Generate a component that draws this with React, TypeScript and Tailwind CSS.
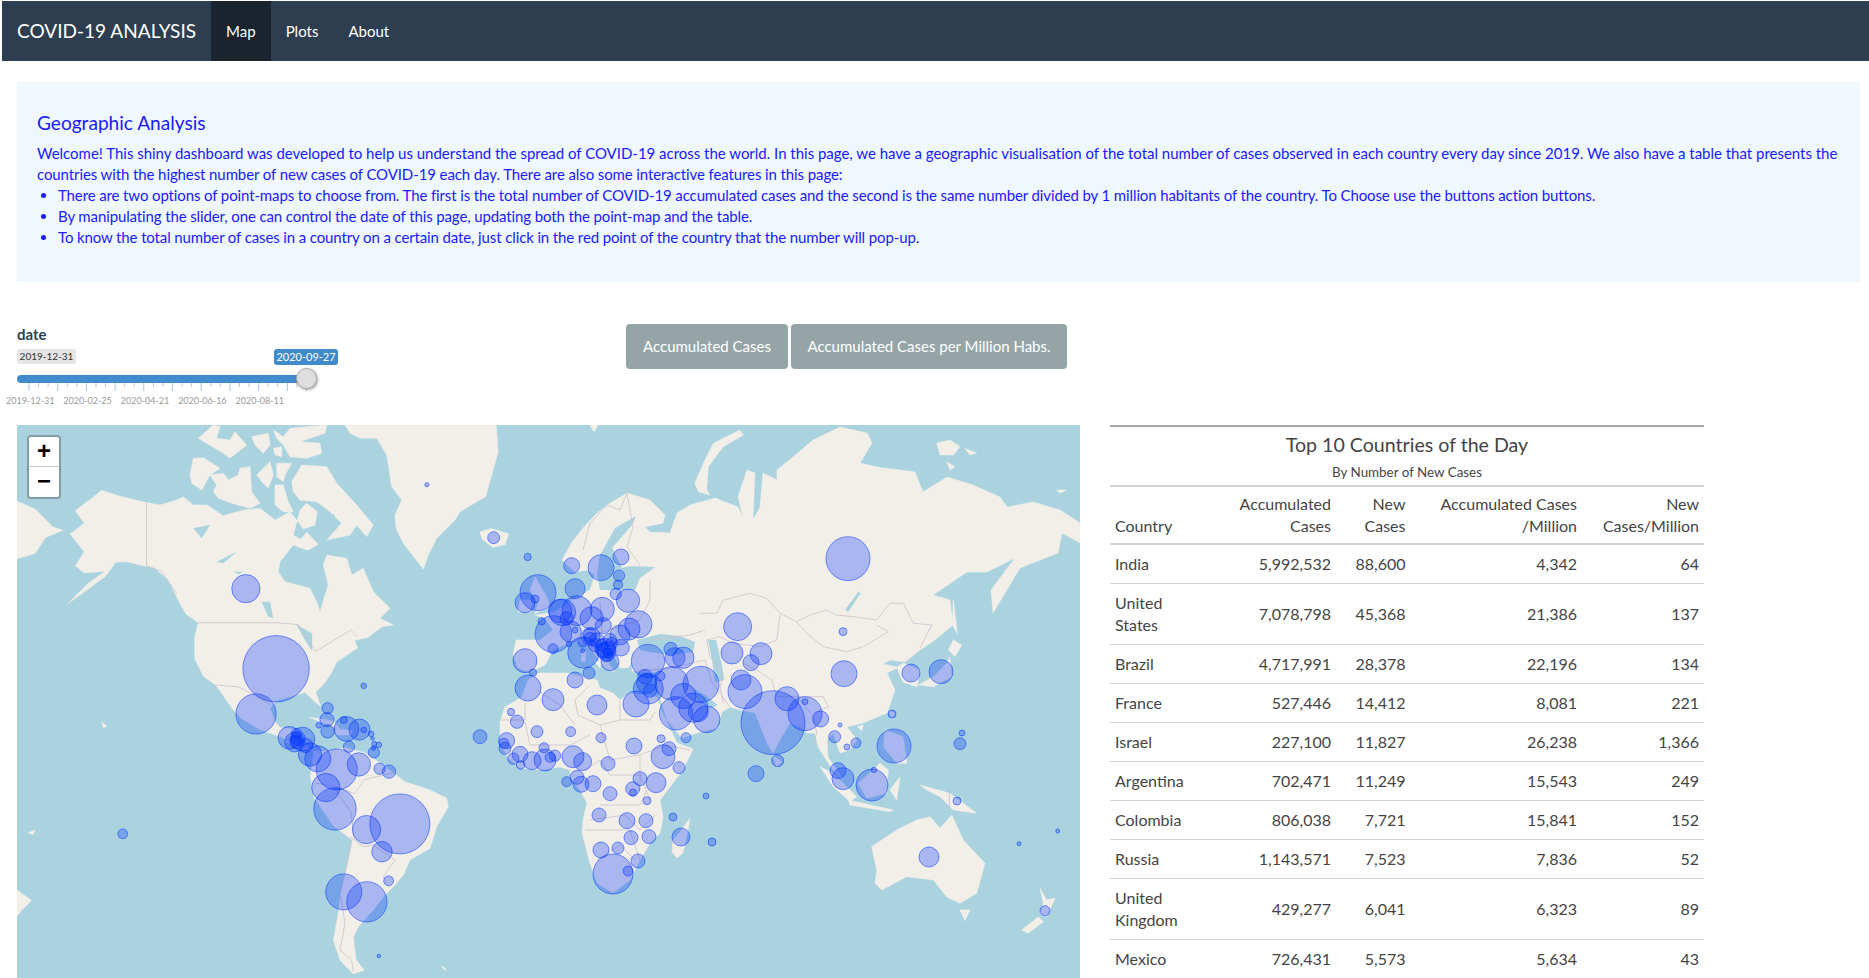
import React from "react";

const pts = (a: number[], ox: number, oy: number, sx: number, sy: number) => {
  const out: string[] = [];
  for (let i = 0; i < a.length; i += 2) out.push(`${(ox + a[i] / sx).toFixed(1)},${(oy + a[i + 1] / sy).toFixed(1)}`);
  return out.join(" ");
};
const pg = (a: number[]) => pts(a, 0, 0, 1, 1);
const z5 = (a: number[]) => pts(a, 0, 420, 2.851, 2.81);
const z3 = (a: number[]) => pts(a, 600, 300, 3, 3);
const z7 = (a: number[]) => pts(a, 700, 500, 3, 3);
const zA = (a: number[]) => pts(a, 160, 425, 3, 3);
const zB = (a: number[]) => pts(a, 330, 780, 3, 3);

const land: string[] = [
  // North & Central America
  z5([215,255,290,198,345,215,418,232]) + " " +
    zA([0,240,50,225,70,215,100,240,140,240,190,272,250,255,300,250,345,285,390,260,410,285,430,312,465,300,472,260,440,235,420,255,400,330,425,345,470,355,440,375,400,360,360,410,355,440,375,470,450,490,470,530,480,560,495,510,505,480,490,420,500,390,560,400,575,450,610,430,640,500,690,550,660,580,700,600]) + " " +
    z5([1090,580,1050,610,1010,620,1020,640,960,680,945,710,925,740,900,765,915,805,895,790,870,765,820,780,785,790,770,810,785,850,800,865,850,870,860,880,830,885,810,905,870,915,895,930,860,925,800,890,740,870,690,840,665,815,640,780,615,745,580,720,555,670,555,610,565,570,530,545,505,500,480,450,440,415,410,410,360,398,330,400,300,440,245,480,195,515,250,460,300,425,240,430,215,410,240,370,200,320,240,290]),
  // Arctic Canada
  zA([100,100,130,98,180,130,150,150,125,195,95,175,90,150]),
  zA([150,150,190,145,205,165,235,150,240,130,270,125,275,200,300,235,270,250,215,235,175,220,160,200,170,180]),
  zA([290,150,330,110,340,150,325,190,305,170]),
  zA([350,115,395,115,375,150,370,170,350,155]),
  zA([345,180,370,180,385,230,400,260,370,260,345,240]),
  zA([115,40,160,0,180,5,170,40,210,45,225,20,260,60,210,100,190,85,165,70]),
  zA([275,35,325,25,330,60,310,85,285,60]),
  zA([340,15,370,35,390,10,500,0,495,25,420,50,480,55,485,85,440,100,390,95,370,60,350,40]),
  zA([340,70,365,65,365,95,345,90]),
  zA([395,170,425,120,500,125,530,175,590,240,640,300,620,335,590,300,570,330,500,345,545,295,510,260,470,230,420,225,400,200]),
  zA([420,345,440,322,475,358,445,375]),
  // Greenland, Iceland, Chukotka
  zA([555,0,570,25,600,40,650,40,680,90,695,185,725,225,705,270,708,310,730,355,790,432,805,390,830,340,885,285,900,260]) + " " + z5([1385,215,1420,90,1415,14]),
  z5([1368,315,1400,305,1450,320,1440,350,1405,358,1375,335]),
  z5([48,228,100,250,150,300,180,310,130,330,100,375,48,390]),
  // South America
  z5([895,930,935,930,985,920,1040,935,1085,965]) + " " +
    zB([225,5,300,30,350,55,355,80,320,140,300,205,240,240,220,285,195,315,165,345,130,390,85,440,70,470,78,540,103,570,70,582,30,540,10,480,25,400,32,340,50,260,67,180]) + " " +
    z5([950,1140,895,1060,885,1000]),
  z5([880,835,950,845,970,870,920,850]),
  z5([955,868,1005,872,1000,885,960,885]),
  z5([48,1320,90,1350,60,1380,48,1395]),
  z5([80,1160,100,1152,95,1165]),
  z5([290,850,305,860,295,865]),
  zB([333,558,345,565,348,572,338,565]),
  // Eurasia
  pg([562,560,572,542,583,528,595,515,607,505,627,493,650,500,665,515,663,523,645,527,650,532,670,533,677,513,690,505,715,498,728,503,738,507,743,517,738,497,747,470,755,473,753,520,760,507,763,473,777,480,777,470,793,457,813,440,840,427,867,433,872,443,860,463,877,467,900,470,915,472,923,492,947,477,973,485,1000,497,1007,507,1033,502,1060,510,1080,523,1080,543,1062,533,1058,553,1020,568,993,613,991,590,1015,558,987,572,967,572,933,595,950,600,953,625,935,640,920,650,905,662,890,660,883,664,897,667,903,663,920,670,917,687,903,682,897,668,887,673,895,690,887,713,863,723,847,727,857,740,850,750,840,753,833,733,827,740,828,757,843,780,833,770,818,747,815,733,807,733,800,727,790,723,780,740,773,753,767,743,755,713,740,710,730,707,722,712,717,728,697,733,682,738,667,720,660,698,657,682,657,672,632,672,632,662,628,668,620,668,612,652,600,642,610,665,615,672,605,668,590,648,578,640,565,645,553,650,545,665,530,672,518,668,513,655,516,640,540,640,553,630,545,618,535,615,555,612,572,600,590,590,595,575,588,570,575,572]),
  // Africa
  pg([500,722,505,707,522,697,528,680,537,673,567,673,597,680,600,688,613,693,620,700,630,693,657,697,662,712,677,743,693,749,683,770,660,800,663,817,660,833,650,843,640,860,630,880,613,893,597,883,590,863,582,833,583,820,587,803,580,790,570,778,570,770,560,767,540,770,520,768,508,758,500,743]),
  pg([690,818,688,830,683,853,677,858,672,852,673,840,680,832]),
  // UK, Ireland, Europe isles
  pg([535,577,547,597,550,608,535,613,538,603,530,590]),
  pg([520,600,533,600,530,612,518,612]),
  pg([590,425,598,425,594,432]),
  pg([595,662,603,660,600,668]),
  pg([582,652,586,652,585,662,581,661]),
  // Arctic Russia
  z3([285,550,310,490,340,430,420,390,430,405,370,440,325,500,320,570,330,585,295,575]),
  z3([1010,430,1050,420,1080,440,1060,465,1020,465]),
  z3([1095,445,1130,460,1110,465]),
  z3([1370,570,1400,570,1380,580]),
  z3([1040,485,1065,500,1050,510]),
  // East and SE Asia
  z7([745,450,760,420,785,435,765,470]),
  z7([655,555,700,530,740,490,750,470,755,530,700,560]),
  z7([760,300,765,340,772,400,757,375]),
  z7([568,632,585,640,575,655]),
  z7([472,680,490,675,485,692]),
  z7([555,690,610,710,620,790,590,790,550,740]),
  z7([360,800,400,820,470,890,450,905,400,860]),
  z7([445,900,580,930,570,935,450,915]),
  z7([475,850,540,790,565,810,560,880,500,895]),
  z7([570,870,600,830,590,900]),
  z7([660,855,750,880,830,940,760,930,720,890,680,870]),
  z7([218,765,245,785,230,800]),
  z7([515,1040,590,990,650,960,690,950,720,985,755,945,790,1020,855,1090,830,1180,780,1210,740,1190,700,1140,620,1130,545,1170,525,1150,530,1110]),
  z7([780,1230,810,1230,795,1262]),
  z7([1020,1165,1040,1200,1065,1195,1040,1250,1020,1240,1030,1210]),
  z7([1015,1250,1030,1265,985,1300,965,1290]),
];

const water: string[] = [
  pg([600,590,635,590,640,578,655,567,630,566,622,568,612,548,632,525,636,516,615,528,600,555,597,575]),
  pg([637,640,660,634,680,636,695,642,693,652,670,655,650,652,640,650]),
  pg([708,640,716,640,722,665,724,680,715,682,712,660]),
  pg([693,688,705,695,718,705,712,708,697,700]),
  z7([435,330,475,275,482,280,445,335]),
  zA([100,310,150,300,125,340]),
  zA([170,410,230,380,190,415]),
  zA([220,440,250,440,235,448]),
  zA([305,530,330,530,340,580,325,575]),
  zA([505,265,525,270,515,290]),
  z5([845,575,890,600,890,650,870,620]),
];

const borders: string[] = [
  z5([418,232,418,410,460,425,505,490]),
  z5([565,570,790,570,850,575,900,650,1000,590,1020,610]),
  z5([615,745,680,750,710,765,770,800]),
  zB([60,170,100,200,130,195,195,240,160,290,170,310]),
  zB([65,190,50,260,30,340,45,430,30,510,65,540,70,575]),
  z5([950,1030,1010,1050,1040,1010,1130,990]),
  z5([900,1020,950,1030,1000,1100,1010,1180]),
  pg([607,505,620,510,627,493]), pg([583,550,590,523,607,505]), pg([627,493,633,527,627,547,640,565]),
  pg([600,602,602,632,585,640]), pg([602,632,640,620,650,600,650,580]),
  pg([650,640,690,635,705,630]), pg([632,672,670,668,705,660,712,682,730,707]),
  pg([537,690,560,705,575,725]), pg([590,685,575,700,578,715,600,725,620,720]), pg([620,700,620,720,650,720,655,712]),
  pg([500,720,525,720,525,700]), pg([525,722,530,745,570,745,590,735]), pg([600,725,610,760,640,755,640,790]),
  pg([640,755,665,745,690,750]), pg([585,770,600,760,610,775,640,775,650,800]), pg([600,805,640,805,647,790]),
  pg([590,820,625,815,640,830,655,815]), pg([585,830,630,830,640,860]), pg([597,860,620,845,635,860]),
  z7([0,340,50,340,70,300,150,280,200,295,240,340,290,365,330,345,380,330,410,345,460,350,530,360,570,310,610,310,640,370,695,375,660,445]),
  z7([290,365,320,400,370,440,440,455,490,440,565,395,530,375]),
  z7([20,420,60,410,100,430,180,440,230,420,240,345]),
  z7([20,420,30,470,70,520,60,560,70,610]),
  z7([130,490,170,510,215,540,230,590,300,590,370,590,385,620,340,640]),
  z7([300,600,340,650,350,700,340,730]),
  z7([748,870,748,925]),
];

const circlesZ5 = [
  [1217,182,6],[701,474,40],[787,699,94],[730,826,57],[1037,747,8],[934,810,16],[932,842,20],[909,858,8],[934,875,19],[988,868,35],[980,843,10],[1025,870,30],[1037,871,8],[1058,882,8],[1062,895,5],[1067,910,7],[1080,913,8],[1065,922,6],[1066,934,16],[995,918,16],[825,893,32],[845,880,14],[840,905,28],[863,897,34],[850,895,20],[845,905,18],[872,915,20],[884,940,33],[906,952,37],[960,982,58],[1023,968,33],[1082,980,16],[1109,988,19],[929,1033,40],[955,1093,60],[1045,1151,40],[1140,1135,85],[1089,1213,29],[1108,1295,14],[980,1326,51],[1046,1354,57],[1080,1506,5],[350,1163,14],
].map(([x, y, r]) => [x / 2.851, 420 + y / 2.81, r / 2.83]);

const circlesZ6 = [
  [131,173,18],[233,231,11],[365,257,24],[453,263,39],[513,231,24],[507,287,17],[504,314,14],[497,342,17],[534,362,35],[375,326,30],[264,338,54],[225,368,30],[255,357,12],[337,397,40],[381,392,45],[330,393,35],[350,415,20],[457,388,36],[425,415,35],[565,433,41],[537,447,33],[275,424,11],[310,462,55],[362,455,32],[375,450,9],[460,437,24],[422,470,28],[510,465,30],[480,480,20],[398,487,14],[357,492,8],[398,512,6],[309,506,15],[400,518,47],[465,505,30],[470,515,28],[513,503,25],[435,495,20],[475,520,15],[460,510,22],[475,505,22],[470,525,20],[455,495,18],[485,490,18],[440,480,22],[420,465,20],[420,475,18],[480,545,27],[225,542,36],[249,578,11],[417,579,18],[375,600,24],[234,624,39],[309,659,33],[441,675,30],[558,672,39],[594,543,50],[662,507,20],[675,533,30],[700,533,32],[753,613,54],[665,610,50],[595,627,45],[590,610,30],[585,590,22],[600,632,20],[630,588,15],[700,648,38],[678,700,50],[730,683,44],[745,695,30],[770,718,40],[183,696,11],[90,770,21],
].map(([x, y, r]) => [450 + x / 3, 480 + y / 3, r / 3]);

const circlesZ7 = [
  [444,176,66],[429,395,12],[113,380,42],[96,459,33],[183,461,33],[153,488,24],[432,521,39],[633,519,27],[723,515,36],[123,540,30],[135,575,51],[219,668,96],[261,596,36],[315,641,51],[315,605,9],[362,657,24],[420,675,6],[404,710,18],[441,741,9],[468,729,15],[576,642,12],[582,738,51],[786,699,9],[780,731,18],[414,812,24],[429,836,33],[516,855,48],[522,810,8],[771,903,12],[687,1071,30],[1035,1232,15],[957,1031,6],[1073,993,6],[233,782,18],[168,821,24],
].map(([x, y, r]) => [700 + x / 3, 500 + y / 3, r / 3]);

const circlesZ8 = [
  [111,5,20],[171,35,18],[272,35,15],[363,53,15],[462,78,24],[543,56,12],[618,53,15],[567,86,21],[549,110,36],[597,143,18],[80,62,24],[72,70,15],[75,85,18],[120,103,24],[100,116,17],[122,135,13],[156,122,27],[192,83,15],[195,120,33],[210,112,15],[225,107,17],[279,110,33],[308,125,27],[384,131,21],[291,172,21],[303,193,24],[260,185,15],[339,191,24],[390,221,21],[357,285,21],[480,176,21],[528,188,30],[458,206,21],[459,218,11],[501,242,12],[441,302,24],[498,302,21],[579,291,12],[678,228,9],[453,353,21],[507,350,21],[414,384,18],[363,390,24],[474,423,21],[444,453,15],[399,462,60],[603,351,27],[696,366,12],
].map(([x, y, r]) => [480 + x / 3, 720 + y / 3, r / 3]);

const circles = [...circlesZ5, ...circlesZ6, ...circlesZ7, ...circlesZ8];

function WorldMap() {
  return (
    <svg viewBox="17 425 1063 553" className="block w-[1063px] h-[553px]">
      <rect x="17" y="425" width="1063" height="553" fill="#aad3df" />
      {land.map((p, i) => <polygon key={i} points={p} fill="#f2efe9" stroke="#f2efe9" strokeWidth="0.5" strokeLinejoin="round" />)}
      {water.map((p, i) => <polygon key={i} points={p} fill="#aad3df" />)}
      {borders.map((p, i) => <polyline key={i} points={p} fill="none" stroke="#cfbfcb" strokeWidth="0.8" />)}
      {circles.map(([x, y, r], i) => (
        <circle key={i} cx={x} cy={y} r={r} fill="#0033ff" fillOpacity="0.3" stroke="#0033ff" strokeOpacity="0.5" strokeWidth="1" />
      ))}
    </svg>
  );
}

function Slider() {
  const majors = [28.5, 57.2, 85.9, 114.6, 143.3, 172, 200.7, 229.4, 258.1, 286.8];
  const ticks: number[] = [];
  majors.forEach((m) => { ticks.push(m + 9.6, m + 19.1); });
  return (
    <div className="w-[321px] shrink-0">
      <div className="h-[21px] text-[15px] leading-[21px] font-bold text-[#2c3e50]">date</div>
      <div className="mt-[4px] flex items-start whitespace-nowrap">
        <span className="h-[15px] w-[59px] shrink-0 rounded-[3px] bg-[#e5e5e5] text-center text-[10px] leading-[15px] text-[#333]">2019-12-31</span>
        <span className="ml-[198px] h-[16px] w-[64px] shrink-0 rounded-[3px] bg-[#428bca] text-center text-[11px] leading-[16px] text-white">2020-09-27</span>
      </div>
      <div className="relative mt-[10px] h-[8px] w-[289px] rounded-l-[4px] bg-[#428bca]">
        <span className="absolute right-[-11px] top-[-7px] h-[21px] w-[21px] rounded-full border border-[#ababab] bg-[#dedede] shadow-[1px_1px_3px_rgba(0,0,0,0.35)]" />
      </div>
      <svg width="321" height="8" className="block">
        {majors.map((m) => <line key={m} x1={m - 17 + 0.5} x2={m - 17 + 0.5} y1="0" y2="8" stroke="#a9c4de" />)}
        <line x1="289.5" x2="289.5" y1="0" y2="8" stroke="#a9c4de" />
        {ticks.filter((t) => t < 306).map((t) => <line key={t} x1={t - 17 + 0.5} x2={t - 17 + 0.5} y1="0" y2="4" stroke="#c4c4c4" />)}
      </svg>
      <div className="mt-[3px] -ml-[15.5px] flex text-[9px] leading-[13px] text-[#999]">
        {["2019-12-31", "2020-02-25", "2020-04-21", "2020-06-16", "2020-08-11"].map((d) => (
          <span key={d} className="w-[57.4px] text-center shrink-0">{d}</span>
        ))}
      </div>
    </div>
  );
}

const rows: [string, string, string, string, string][] = [
  ["India", "5,992,532", "88,600", "4,342", "64"],
  ["United States", "7,078,798", "45,368", "21,386", "137"],
  ["Brazil", "4,717,991", "28,378", "22,196", "134"],
  ["France", "527,446", "14,412", "8,081", "221"],
  ["Israel", "227,100", "11,827", "26,238", "1,366"],
  ["Argentina", "702,471", "11,249", "15,543", "249"],
  ["Colombia", "806,038", "7,721", "15,841", "152"],
  ["Russia", "1,143,571", "7,523", "7,836", "52"],
  ["United Kingdom", "429,277", "6,041", "6,323", "89"],
  ["Mexico", "726,431", "5,573", "5,634", "43"],
];

function TopTable() {
  return (
    <table className="ml-[30px] w-[594px] table-fixed border-collapse border-t-2 border-t-[#a8a8a8] text-[16px] leading-[22px] text-[#444] self-start">
      <colgroup>
        <col className="w-[100px]" />
        <col className="w-[126px]" />
        <col className="w-[74.5px]" />
        <col className="w-[171.5px]" />
        <col className="w-[122px]" />
      </colgroup>
      <thead>
        <tr className="border-b-2 border-b-[#d3d3d3]">
          <th colSpan={5} className="h-[60px] px-[5px] text-center font-normal">
            <div className="text-[19.6px] leading-[26px]">Top 10 Countries of the Day</div>
            <div className="mt-[5px] text-[13.4px] leading-[18px]">By Number of New Cases</div>
          </th>
        </tr>
        <tr className="border-b-2 border-b-[#d3d3d3] align-bottom">
          <th className="px-[5px] pt-[6px] pb-[6px] text-left font-normal">Country</th>
          <th className="px-[5px] pt-[6px] pb-[6px] text-right font-normal">Accumulated Cases</th>
          <th className="px-[5px] pt-[6px] pb-[6px] text-right font-normal">New Cases</th>
          <th className="px-[5px] pt-[6px] pb-[6px] text-right font-normal">Accumulated Cases /Million</th>
          <th className="px-[5px] pt-[6px] pb-[6px] text-right font-normal">New Cases/Million</th>
        </tr>
      </thead>
      <tbody>
        {rows.map((r) => (
          <tr key={r[0]} className="border-b border-b-[#d3d3d3]">
            <td className="px-[5px] py-[8px] text-left">{r[0]}</td>
            <td className="px-[5px] py-[8px] text-right">{r[1]}</td>
            <td className="px-[5px] py-[8px] text-right">{r[2]}</td>
            <td className="px-[5px] py-[8px] text-right">{r[3]}</td>
            <td className="px-[5px] py-[8px] text-right">{r[4]}</td>
          </tr>
        ))}
      </tbody>
    </table>
  );
}

export default function App() {
  return (
    <div className="h-[978px] w-[1869px] overflow-hidden bg-white pt-[1px] font-[Lato,sans-serif] text-[15px]">
      <nav className="ml-[2px] flex h-[60px] items-stretch bg-[#2c3e50] text-white">
        <span className="px-[15px] text-[19.05px] leading-[60px]">COVID-19 ANALYSIS</span>
        <a className="bg-[#1a242f] px-[15px] leading-[60px]">Map</a>
        <a className="px-[15px] leading-[60px]">Plots</a>
        <a className="px-[15px] leading-[60px]">About</a>
      </nav>
      <main className="px-[17px]">
        <section className="mt-[21px] h-[200px] w-[1843px] bg-[#eff8ff] px-[20px] pt-[30px] text-[15px] leading-[21.1px] text-[#1a1aff]">
          <h4 className="mb-[10px] text-[19.1px] leading-[21px]">Geographic Analysis</h4>
          <p>
            <span className="block whitespace-nowrap tracking-[-0.015px]">Welcome! This shiny dashboard was developed to help us understand the spread of COVID-19 across the world. In this page, we have a geographic visualisation of the total number of cases observed in each country every day since 2019. We also have a table that presents the</span>
            <span className="block whitespace-nowrap tracking-[-0.1px]">countries with the highest number of new cases of COVID-19 each day. There are also some interactive features in this page:</span>
          </p>
          <ul className="list-disc pl-[21px] tracking-[-0.12px]">
            <li>There are two options of point-maps to choose from. The first is the total number of COVID-19 accumulated cases and the second is the same number divided by 1 million habitants of the country. To Choose use the buttons action buttons.</li>
            <li>By manipulating the slider, one can control the date of this page, updating both the point-map and the table.</li>
            <li>To know the total number of cases in a country on a certain date, just click in the red point of the country that the number will pop-up.</li>
          </ul>
        </section>
        <div className="mt-[42px] flex h-[101px] items-start">
          <Slider />
          <div className="ml-[288px] flex gap-[3px]">
            <button className="h-[45px] w-[162px] rounded-[4px] bg-[#95a5a6] text-white">Accumulated Cases</button>
            <button className="h-[45px] w-[276px] rounded-[4px] bg-[#95a5a6] text-white">Accumulated Cases per Million Habs.</button>
          </div>
        </div>
        <div className="flex items-start">
          <div className="relative w-[1063px] shrink-0">
            <WorldMap />
            <div className="absolute left-[10px] top-[10px] w-[34px] rounded-[4px] border-2 border-[rgba(0,0,0,0.25)] bg-clip-padding">
              <div className="h-[30px] rounded-t-[2px] border-b border-b-[#ccc] bg-white text-center font-['Liberation_Sans',sans-serif] text-[24px] font-bold leading-[28px] text-black">+</div>
              <div className="h-[30px] rounded-b-[2px] bg-white text-center font-['Liberation_Sans',sans-serif] text-[24px] font-bold leading-[28px] text-black">−</div>
            </div>
          </div>
          <TopTable />
        </div>
      </main>
    </div>
  );
}
